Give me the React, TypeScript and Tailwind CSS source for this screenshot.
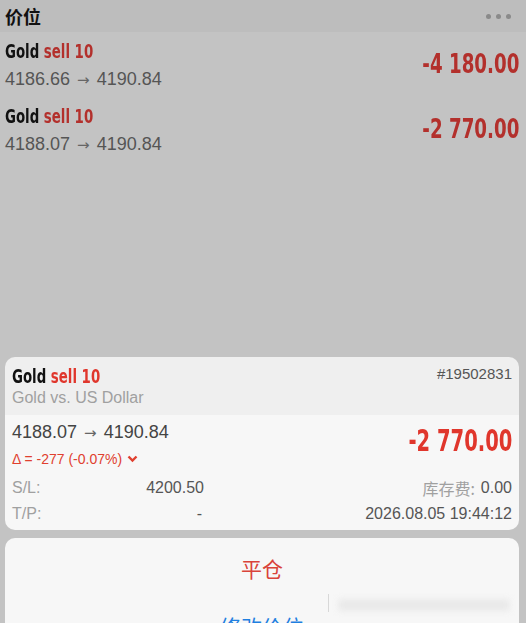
import React from "react";

const cond = { fontFamily: '"DejaVu Sans Condensed", "Roboto", sans-serif' };

function Arrow() {
  return <span className="text-[15px] text-[#666] px-[2px]" style={{ fontFamily: '"DejaVu Sans", sans-serif' }}>→</span>;
}

function Row({ a, b, pl }: { a: string; b: string; pl: string }) {
  return (
    <div className="flex items-start justify-between pl-[5px] pr-[7px] h-[65px]">
      <div className="flex flex-col">
        <div className="text-[19px] leading-[22px] font-bold inline-block scale-x-[0.78] origin-left whitespace-nowrap" style={cond}>
          <span className="text-[#111]">Gold</span> <span className="text-[#b3302c]">sell 10</span>
        </div>
        <div className="text-[18px] leading-[22px] text-[#555] mt-[6px] whitespace-nowrap">{a} <Arrow /> {b}</div>
      </div>
      <div className="text-[26px] leading-[30px] font-bold text-[#b3302c] mt-[9px] inline-block scale-x-[0.78] origin-right whitespace-nowrap" style={cond}>{pl}</div>
    </div>
  );
}

export default function App() {
  return (
    <div className="w-[526px] h-[623px] overflow-hidden bg-[#c3c3c3] relative" style={{ fontFamily: '"Liberation Sans", "Noto Sans CJK SC", sans-serif' }}>
      <div className="h-[32px] bg-[#bdbdbd] flex items-center justify-between pl-[5px] pr-[15px]">
        <div className="text-[18px] font-bold text-[#111]" style={{ fontFamily: '"Noto Sans CJK SC", sans-serif' }}>价位</div>
        <div className="flex gap-[5px]">
          <span className="w-[5px] h-[5px] rounded-full bg-[#8a8a8a]" />
          <span className="w-[5px] h-[5px] rounded-full bg-[#8a8a8a]" />
          <span className="w-[5px] h-[5px] rounded-full bg-[#8a8a8a]" />
        </div>
      </div>
      <div className="pt-[8px]">
        <Row a="4186.66" b="4190.84" pl="-4 180.00" />
        <Row a="4188.07" b="4190.84" pl="-2 770.00" />
      </div>

      <div className="absolute left-[5px] right-[7px] top-[357px] flex flex-col gap-[8px]">
        <div className="rounded-[10px] overflow-hidden h-[173px] flex flex-col">
          <div className="bg-[#efefef] h-[58px] px-[7px] pt-[8px] flex justify-between">
            <div className="flex flex-col">
              <div className="text-[19px] leading-[22px] font-bold inline-block scale-x-[0.78] origin-left whitespace-nowrap" style={cond}>
                <span className="text-[#111]">Gold</span> <span className="text-[#e0362c]">sell 10</span>
              </div>
              <div className="text-[16px] leading-[20px] text-[#a0a0a0] mt-[1px]">Gold vs. US Dollar</div>
            </div>
            <div className="text-[15px] leading-[20px] text-[#555] mt-[-1px]">#19502831</div>
          </div>
          <div className="bg-[#f7f7f7] flex-1 px-[7px] pt-[6px]">
            <div className="flex justify-between">
              <div className="flex flex-col">
                <div className="text-[18px] leading-[22px] text-[#444] whitespace-nowrap">4188.07 <Arrow /> 4190.84</div>
                <div className="flex items-center gap-[5px] text-[14px] leading-[20px] text-[#e0402f] mt-[5px]">
                  <span>Δ = -277 (-0.07%)</span>
                  <svg width="11" height="8" viewBox="0 0 11 8"><path d="M1.5 1.5 L5.5 5.5 L9.5 1.5" stroke="#e0402f" strokeWidth="2.4" fill="none" /></svg>
                </div>
              </div>
              <div className="text-[31px] leading-[34px] font-bold text-[#e0362c] mt-[2px] inline-block scale-x-[0.7] origin-right whitespace-nowrap" style={cond}>-2 770.00</div>
            </div>
            <div className="flex justify-between text-[16px] leading-[20px] mt-[9px]">
              <div className="flex w-[192px] justify-between">
                <span className="text-[#a0a0a0]">S/L:</span>
                <span className="text-[#555]">4200.50</span>
              </div>
              <div className="flex gap-[6px]">
                <span className="text-[#a0a0a0]" style={{ fontFamily: '"Noto Sans CJK SC", sans-serif' }}>库存费:</span>
                <span className="text-[#555]">0.00</span>
              </div>
            </div>
            <div className="flex justify-between text-[16px] leading-[20px] mt-[6px]">
              <div className="flex w-[192px] justify-between">
                <span className="text-[#a0a0a0]">T/P:</span>
                <span className="text-[#555] pr-[2px]">-</span>
              </div>
              <span className="text-[#555]">2026.08.05 19:44:12</span>
            </div>
          </div>
        </div>
        <div className="rounded-t-[10px] bg-[#f7f7f7] h-[120px] flex flex-col items-center" style={{ fontFamily: '"Noto Sans CJK SC", sans-serif' }}>
          <div className="text-[21px] leading-[28px] text-[#d9433a] mt-[16px]">平仓</div>
          <div className="text-[21px] leading-[28px] text-[#1f7fe0] mt-[30px]">修改价位</div>
        </div>
      </div>
      <div className="absolute left-[328px] top-[594px] w-[1px] h-[18px] bg-[#d8d8d8]" />
      <div className="absolute left-[338px] top-[599px] w-[172px] h-[12px] bg-[#e6e6e6] blur-[3px] opacity-80" />
    </div>
  );
}
